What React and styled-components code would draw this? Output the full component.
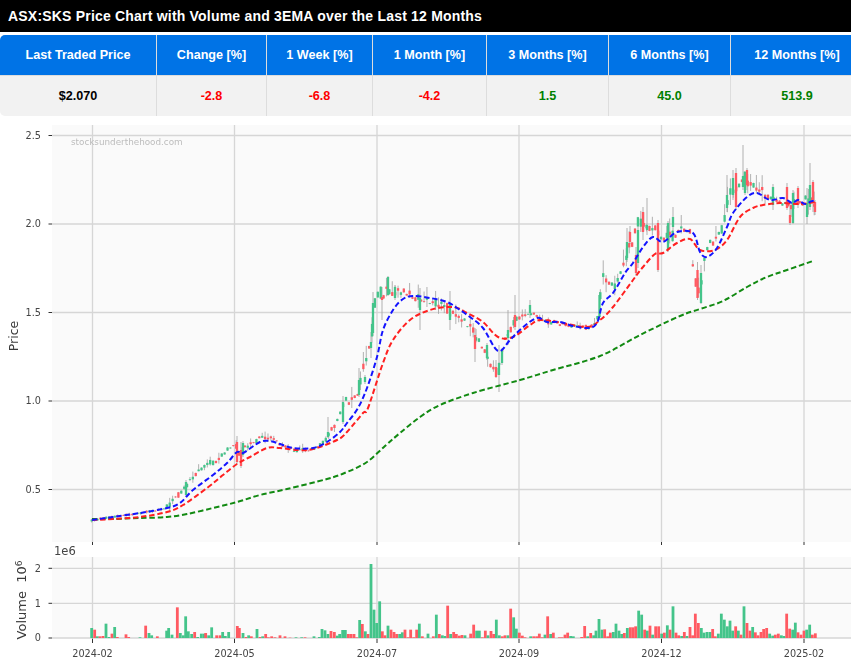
import React from 'react';
import styled, { createGlobalStyle } from 'styled-components';

const Global = createGlobalStyle`
  html, body { margin: 0; padding: 0; background: #fff; }
  body { font-family: "Liberation Sans", Arial, sans-serif; overflow: hidden; }
`;
const Page = styled.div`width: 851px; height: 664px; display: flex; flex-direction: column; background: #fff; overflow: hidden;`;
const TitleBar = styled.h1`
  margin: 0 0 3px; height: 32px; padding: 0 8px; display: flex; align-items: center;
  background: #000; color: #fff; font-size: 14px; font-weight: 700; letter-spacing: 0.2px; white-space: nowrap;
`;
const Table = styled.div`border-radius: 5px 0 0 5px; overflow: hidden; display: flex; flex-direction: column;`;
const Row = styled.div`
  display: grid; grid-template-columns: 157px 110px 106px 114px 122px 122px 132px;
  height: ${p => p.$h}px; background: ${p => p.$bg};
`;
const HeadCell = styled.div`
  display: flex; align-items: center; justify-content: center; color: #fff; font-size: 12.6px; font-weight: 700;
  border-right: 1px solid #ddd; border-bottom: 1px solid #ddd; &:last-child { border-right: 0; }
`;
const Cell = styled.div`
  display: flex; align-items: center; justify-content: center; font-size: 12.6px; font-weight: 700;
  color: ${p => p.$c}; border-right: 1px solid #ddd; &:last-child { border-right: 0; }
`;
const Chart = styled.svg`display: block; width: 851px; height: 548px; flex: none; font-family: "DejaVu Sans", sans-serif; filter: blur(0.3px);`;

const heads = ['Last Traded Price','Change [%]','1 Week [%]','1 Month [%]','3 Months [%]','6 Months [%]','12 Months [%]'];
const vals = [['$2.070','#000'],['-2.8','#f00'],['-6.8','#f00'],['-4.2','#f00'],['1.5','#008000'],['45.0','#008000'],['513.9','#008000']];

const leftV = '275g30 284r25 292g5 300r5 309r6 318g43 327g3 336r13 344g33 352r3 378r11 386r3 420g2 437r37 447g15 455g8 472r5 500g22 506g30 516g10 532r92 541g15 550g8 557g65 565g20 575g12 584r18 593g3 604g13 612g13 617r15 626g8 635g32 650r8 660r8 668g18 676g6 686g18 712r36 718r30 729g15 738r3 746g8 754r5 771g27 780r3 788g5 797r12 805r2 815r5 825r2 840r8 855r5 870r1 888g2 905g2 915r2 942g5 958g3 966g27 975g23 984g12 993r21 1003r18 1012g7 1019g12 1028g24 1036g24 1045r12 1053r12 1062r12 1070r2 1079g54 1087r42 1096g20 1104r12 1113g222 1122g85 1130g45 1139g110 1147r20 1155r8 1164g37 1173r25 1182r18 1190r12 1199g12 1207g17 1215r25 1224r2 1232r25 1241r2 1250r25 1258g43 1267r5 1284g13';
const rightV = '10r5 19g70 28r12 37g8 45g6 53r97 62g12 71r18 79r12 88r7 96r9 105g8 122r13 131r40 140g22 148g22 157r2 166r22 174g8 183r21 191r12 199g55 208g8 217r5 225r8 234g8 242r88 251g62 259g28 268r16 277r7 285r2 302g5 311r5 320r5 328r13 337r2 345g10 353r65 362g12 370r16 388r2 396r2 405r10 413r16 422g6 430g5 455r3 464r36 473g5 482r15 491g8 498g22 507g57 516g25 524r26 533r5 541r16 550g18 558g43 567g22 575g12 583r15 592g30 601r32 609r32 617r35 626g82 635g70 644r25 652g22 660r37 668g10 677r35 686r35 695g13 703r16 712g38 720r25 729g95 738r16 746r8 755g6 763r18 771g6 780r33 788r8 796r73 805r45 814g30 822g16 831g18 840g18 848r27 856r5 865g13 874g73 883g55 892g35 900g52 908g22 917r35 925g22 933r10 942g95 951r45 960r22 968g33 976r17 984r8 993r18 1001r27 1010r30 1019g13 1028g7 1036r10 1045r13 1054g8 1062g6 1070r73 1079r28 1088g25 1096g46 1104r17 1113r10 1122r22 1130g25 1139g40 1147r10 1156r14';
const parseV = (s, off) => [...s.matchAll(/(\d+)([rg])(\d+)/g)].map(m => ({ x: off + +m[1] / 3, c: m[2], h: +m[3] / 3 }));
const bars = [...parseV(leftV, 0), ...parseV(rightV, 430)];

const green = [[92,519],[113,519],[140,518],[167,517],[187,514],[213,508],[237,502],[260,495],[287,489],[327,479],[347,472],[367,462],[385,446],[400,433],[420,417],[440,405],[473,393],[520,380],[553,370],[600,356],[640,335],[680,316],[700,309],[723,301],[747,287],[767,277],[787,270],[813,261]];
const blue = [[92,520],[113,517],[140,513],[167,508],[180,503],[193,490],[213,475],[227,463],[237,452],[243,453],[260,442],[270,441],[280,444],[293,448],[313,448],[327,442],[340,432],[347,423],[358,408],[367,388],[377,357],[383,330],[393,310],[403,299],[413,296],[430,298],[447,302],[457,308],[470,317],[483,328],[498,351],[510,340],[522,328],[537,318],[547,322],[560,322],[573,326],[588,328],[597,323],[603,303],[613,293],[625,273],[633,263],[643,247],[653,237],[663,242],[677,232],[693,233],[700,252],[707,257],[717,248],[727,227],[733,213],[747,197],[757,193],[770,200],[783,198],[792,203],[798,200],[805,204],[812,201],[815,202]];
const red = [[92,520],[113,519],[140,517],[167,512],[183,505],[207,488],[223,475],[237,464],[250,457],[267,448],[280,448],[297,450],[313,449],[337,440],[347,432],[363,413],[368,408],[383,363],[393,340],[410,320],[430,310],[453,307],[467,313],[483,322],[498,337],[513,337],[530,325],[540,320],[557,322],[587,327],[600,320],[613,307],[633,280],[643,267],[655,254],[663,253],[677,243],[690,239],[700,250],[715,250],[727,240],[740,217],[753,208],[763,205],[780,203],[800,204],[815,202]];
const price = [[92,520],[110,517],[140,513],[165,509],[170,503],[175,497],[185,487],[190,480],[200,470],[205,465],[215,462],[225,452],[235,445],[240,455],[245,447],[260,438],[270,437],[280,445],[293,450],[313,450],[325,440],[335,425],[345,402],[358,398],[360,380],[370,345],[375,300],[388,290],[400,293],[420,297],[440,305],[455,315],[470,325],[480,345],[490,365],[497,372],[505,340],[515,320],[530,312],[540,320],[560,324],[590,328],[597,322],[603,275],[615,285],[625,260],[640,220],[650,225],[665,240],[680,230],[690,235],[695,285],[700,295],[705,250],[720,235],[730,195],[745,178],[760,190],[775,200],[790,205],[800,205],[810,198],[815,205]];

const smooth = pts => {
  let d = `M${pts[0][0]},${pts[0][1]}`;
  for (let i = 0; i < pts.length - 1; i++) {
    const p0 = pts[i - 1] || pts[i], p1 = pts[i], p2 = pts[i + 1], p3 = pts[i + 2] || p2;
    d += `C${(p1[0] + (p2[0] - p0[0]) / 6).toFixed(1)},${(p1[1] + (p2[1] - p0[1]) / 6).toFixed(1)} ${(p2[0] - (p3[0] - p1[0]) / 6).toFixed(1)},${(p2[1] - (p3[1] - p1[1]) / 6).toFixed(1)} ${p2[0]},${p2[1]}`;
  }
  return d;
};
const interp = (pts, x) => {
  for (let i = 0; i < pts.length - 1; i++) if (x <= pts[i + 1][0]) {
    const t = (x - pts[i][0]) / (pts[i + 1][0] - pts[i][0]);
    return pts[i][1] + t * (pts[i + 1][1] - pts[i][1]);
  }
  return pts[pts.length - 1][1];
};
let seed = 12345;
const rnd = () => { seed = (seed + 0x6D2B79F5) | 0; let t = Math.imul(seed ^ (seed >>> 15), 1 | seed); t = (t + Math.imul(t ^ (t >>> 7), 61 | t)) ^ t; return ((t ^ (t >>> 14)) >>> 0) / 4294967296; };
const amp = x => x < 165 ? 1 : x < 345 ? 3 : x < 500 ? 7 : x < 600 ? 3 : 8;
const candles = Array.from({ length: 251 }, (_, i) => {
  const x = 91.7 + 2.89 * i;
  const near = bars.reduce((b, v) => Math.abs(v.x - x) < Math.abs(b.x - x) ? v : b, bars[0]);
  const a = amp(x), c = interp(price, x) + (rnd() - 0.5) * a;
  const close = Math.abs(near.x - x) < 1.5;
  const half = close ? Math.min(a * 0.9, 0.7 + near.h / 7) : 0.4;
  const long = rnd() < 0.55;
  return { x, c: near.c, top: c - half, bot: c + half, hi: c - half - (long ? rnd() * a * 1.8 : 0.3), lo: c + half + (long ? rnd() * a * 1.4 : 0.3) };
});
const B = (x, c, top, bot, hi = top - 2, lo = bot + 2) => ({ x, c, top, bot, hi, lo });
const extra = [
  B(186,'g',482,495), B(237,'r',442,462,436,464), B(241,'r',450,466,442,468), B(243,'g',443,455), B(343,'g',402,422,396,424), B(328,'g',432,437,417,438),
  B(359,'g',380,395,368,397), B(365,'g',377,382), B(371,'g',342,348,332,358), B(373,'g',303,333,292,336), B(388,'g',277,295,276,296), B(382,'r',297,300,287,320), B(395,'g',287,298), B(420,'g',298,310,288,330), B(450,'g',303,320,291,330),
  B(475,'r',335,349,328,362), B(487,'g',345,358), B(496,'r',367,377,360,378), B(499,'g',363,375,345,392), B(502,'g',350,363), B(508,'g',330,338,310,345), B(515,'r',315,327,295,330), B(530,'g',305,313,300,318), B(599.5,'g',295,317,292,320),
  B(627,'g',242,258,228,262), B(630,'r',232,242,226,244), B(636,'r',255,273,247,276), B(638,'g',230,263,225,268), B(643,'r',212,232,207,240), B(647,'g',225,230,198,235), B(658,'r',223,270,220,272), B(668,'g',223,250), B(673,'g',217,227,207,232),
  B(697.5,'r',270,298,262,300), B(701,'g',273,303,265,304), B(727,'g',195,208,175,212), B(733,'g',178,195,170,200), B(736,'r',173,207,168,210), B(743,'g',176,187,145,190), B(745,'g',175,193), B(747,'r',170,185,168,190),
  B(773,'g',187,205,184,210), B(787,'r',187,208,183,210), B(790,'r',215,223,205,225), B(793,'g',193,223,190,224), B(798,'r',188,205,186,208), B(807,'g',203,217,188,224), B(810,'g',185,207,163,210), B(813,'r',182,200,180,212), B(815,'r',202,212,200,215),
];
const xTicks = [[92.5,'2024-02'],[234.5,'2024-05'],[377,'2024-07'],[519,'2024-09'],[661.5,'2024-12'],[804,'2025-02']];
const pTicks = [[135.5,'2.5'],[224,'2.0'],[312.5,'1.5'],[401,'1.0'],[489.5,'0.5']];
const vTicks = [[568.3,'2'],[603.3,'1'],[638,'0']];
const colr = { g: '#44c48a', r: '#ff5a62' };

const GridLine = styled.line`stroke: #d6d6d6; stroke-width: 1.3;`;
const Tick = styled.line`stroke: #333; stroke-width: 1;`;
const TickText = styled.text`font-size: 9.7px; fill: #444;`;
const Watermark = styled.text`font-size: 8.8px; fill: #bcbcbc;`;
const UnitText = styled.text`font-size: 11.5px; fill: #444;`;
const AxisText = styled.text`font-size: ${p => p.$s}px; fill: #3a3a3a; white-space: pre;`;
const Wick = styled.line`stroke: #a8a8a8; stroke-width: 0.9;`;
const Ema = styled.path`fill: none; stroke: ${p => p.$c}; stroke-width: 2; stroke-dasharray: 5.4 2.8;`;
const PlotBg = styled.rect`fill: #fafafa;`;

export default function App() {
  const all = [...candles, ...extra];
  return (
    <Page>
      <Global />
      <TitleBar>ASX:SKS Price Chart with Volume and 3EMA over the Last 12 Months</TitleBar>
      <Table>
        <Row $h={41} $bg="#0073e6">{heads.map(h => <HeadCell key={h}>{h}</HeadCell>)}</Row>
        <Row $h={40} $bg="#f2f2f2">{vals.map(([v, c]) => <Cell key={v} $c={c}>{v}</Cell>)}</Row>
      </Table>
      <Chart viewBox="0 116 851 548">
        <PlotBg x="52" y="125" width="799" height="417" />
        <PlotBg x="52" y="557" width="799" height="81" />
        {xTicks.map(([x]) => <g key={x}>
          <GridLine x1={x} x2={x} y1={125} y2={542} />
          <GridLine x1={x} x2={x} y1={557} y2={638} />
          <Tick x1={x} x2={x} y1={542} y2={545} />
          <Tick x1={x} x2={x} y1={638} y2={643} />
        </g>)}
        {[...pTicks, ...vTicks].map(([y, t], i) => <g key={i}>
          <GridLine x1={52} x2={851} y1={y} y2={y} />
          <Tick x1={48.5} x2={52} y1={y} y2={y} />
          <TickText x={41} y={y + 3.4} textAnchor="end">{t}</TickText>
        </g>)}
        <Watermark x={71} y={145}>stocksunderthehood.com</Watermark>
        {all.map((k, i) => <Wick key={i} x1={k.x} x2={k.x} y1={k.hi} y2={k.lo} />)}
        {all.map((k, i) => <rect key={i} x={k.x - 1.15} y={k.top} width="2.3" height={Math.max(0.8, k.bot - k.top)} fill={colr[k.c]} />)}
        <Ema $c="#128a12" d={smooth(green)} />
        <Ema $c="#ff2020" d={smooth(red)} />
        <Ema $c="#1414ff" d={smooth(blue)} />
        {bars.map((b, i) => <rect key={i} x={b.x - 1.4} y={638 - b.h} width="2.8" height={b.h} fill={colr[b.c]} />)}
        <UnitText x={54} y={555}>1e6</UnitText>
        <AxisText $s={12.5} transform="translate(18,336) rotate(-90)" textAnchor="middle">Price</AxisText>
        <AxisText $s={13} transform="translate(26,600) rotate(-90)" textAnchor="middle">{'Volume  10'}<tspan dy="-4.5" fontSize="9">6</tspan></AxisText>
        {xTicks.map(([x, t]) => <TickText key={t} x={x} y={657} textAnchor="middle">{t}</TickText>)}
      </Chart>
    </Page>
  );
}
